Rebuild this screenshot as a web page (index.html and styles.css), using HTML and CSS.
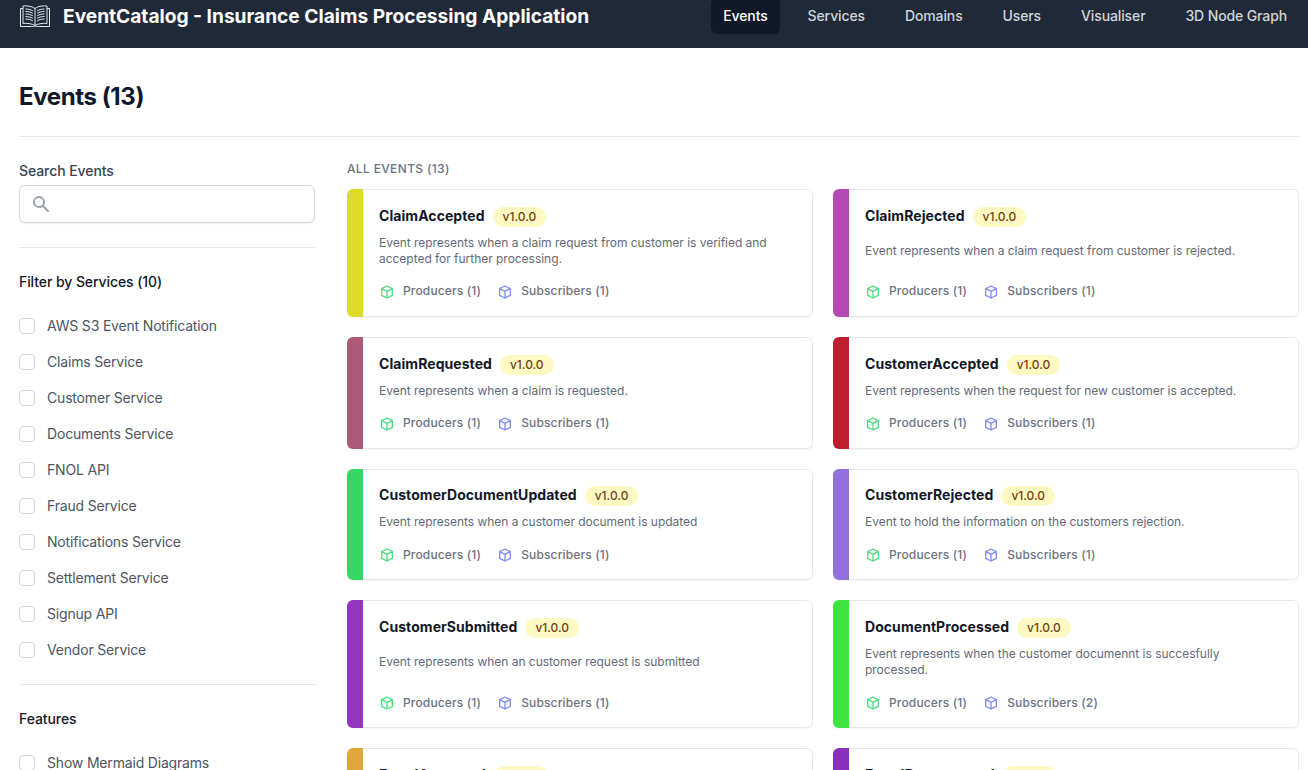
FILE: index.html
```html
<!DOCTYPE html>
<html lang="en">
<head>
<meta charset="utf-8">
<title>Events (13)</title>
<link rel="stylesheet" href="styles.css">
</head>
<body>
<svg class="sprite" aria-hidden="true">
  <symbol id="cube" viewBox="0 0 24 24"><path fill="none" stroke="currentColor" stroke-width="2" stroke-linecap="round" stroke-linejoin="round" d="M20 7l-8-4-8 4m16 0l-8 4m8-4v10l-8 4m0-10L4 7m8 4v10M4 7v10l8 4"/></symbol>
</svg>
<header class="topbar">
  <a class="brand" href="#">
    <svg class="brand-icon" viewBox="0 0 30 22" fill="none" stroke="currentColor" stroke-width="1">
      <path d="M15 3.500C12 1 6 .500 3 1V18.500C6 18 12 18.500 15 20.500C18 18.500 24 18 27 18.500V1C24 .500 18 1 15 3.500Z"/>
      <path d="M15 3.500V20.500"/>
      <path d="M3 3.500H.500V21.500H11.500C13 21.500 14 21.500 15 22C16 21.500 17 21.500 18.500 21.500H29.500V3.500H27"/>
      <path d="M5.500 4C8 4 10.500 4.500 12.800 5.800M5.500 6.500C8 6.500 10.500 7 12.800 8.300M5.500 9C8 9 10.500 9.500 12.800 10.800M5.500 11.500C8 11.500 10.500 12 12.800 13.300M5.500 14C8 14 10.500 14.500 12.800 15.800M24.500 4C22 4 19.500 4.500 17.200 5.800M24.500 6.500C22 6.500 19.500 7 17.200 8.300M24.500 9C22 9 19.500 9.500 17.200 10.800M24.500 11.500C22 11.500 19.500 12 17.200 13.300M24.500 14C22 14 19.500 14.500 17.200 15.800"/>
    </svg>
    <span class="brand-name">EventCatalog - Insurance Claims Processing Application</span>
  </a>
  <nav class="nav">
    <a class="nav-link is-active" href="#">Events</a>
    <a class="nav-link" href="#">Services</a>
    <a class="nav-link" href="#">Domains</a>
    <a class="nav-link" href="#">Users</a>
    <a class="nav-link" href="#">Visualiser</a>
    <a class="nav-link" href="#">3D Node Graph</a>
  </nav>
</header>
<main class="page">
  <h1 class="page-title">Events (13)</h1>
  <div class="layout">
    <aside class="sidebar">
      <label class="search-label" for="search">Search Events</label>
      <div class="search-box">
        <svg class="search-icon" viewBox="0 0 20 20" fill="currentColor"><path fill-rule="evenodd" clip-rule="evenodd" d="M8 4a4 4 0 100 8 4 4 0 000-8zM2 8a6 6 0 1110.890 3.476l4.817 4.817a1 1 0 01-1.414 1.414l-4.816-4.816A6 6 0 012 8z"/></svg>
        <input class="search-input" id="search" type="text">
      </div>
      <section class="filter">
        <h2 class="filter-title">Filter by Services (10)</h2>
        <ul class="filter-list">
          <li class="filter-item"><span class="check"></span>AWS S3 Event Notification</li>
          <li class="filter-item"><span class="check"></span>Claims Service</li>
          <li class="filter-item"><span class="check"></span>Customer Service</li>
          <li class="filter-item"><span class="check"></span>Documents Service</li>
          <li class="filter-item"><span class="check"></span>FNOL API</li>
          <li class="filter-item"><span class="check"></span>Fraud Service</li>
          <li class="filter-item"><span class="check"></span>Notifications Service</li>
          <li class="filter-item"><span class="check"></span>Settlement Service</li>
          <li class="filter-item"><span class="check"></span>Signup API</li>
          <li class="filter-item"><span class="check"></span>Vendor Service</li>
        </ul>
      </section>
      <section class="filter">
        <h2 class="filter-title">Features</h2>
        <ul class="filter-list">
          <li class="filter-item"><span class="check"></span>Show Mermaid Diagrams</li>
        </ul>
      </section>
    </aside>
    <section class="results">
      <h2 class="results-title">All Events (13)</h2>
      <div class="grid">
        <article class="card"><div class="bar c1"></div><div class="body"><div class="head"><span class="name">ClaimAccepted</span><span class="badge">v1.0.0</span></div><p class="desc"><span>Event represents when a claim request from customer is verified and accepted for further processing.</span></p><div class="meta"><span class="stat"><svg class="cube green"><use href="#cube"/></svg>Producers (1)</span><span class="stat"><svg class="cube indigo"><use href="#cube"/></svg>Subscribers (1)</span></div></div></article>
        <article class="card"><div class="bar c2"></div><div class="body"><div class="head"><span class="name">ClaimRejected</span><span class="badge">v1.0.0</span></div><p class="desc"><span>Event represents when a claim request from customer is rejected.</span></p><div class="meta"><span class="stat"><svg class="cube green"><use href="#cube"/></svg>Producers (1)</span><span class="stat"><svg class="cube indigo"><use href="#cube"/></svg>Subscribers (1)</span></div></div></article>
        <article class="card"><div class="bar c3"></div><div class="body"><div class="head"><span class="name">ClaimRequested</span><span class="badge">v1.0.0</span></div><p class="desc"><span>Event represents when a claim is requested.</span></p><div class="meta"><span class="stat"><svg class="cube green"><use href="#cube"/></svg>Producers (1)</span><span class="stat"><svg class="cube indigo"><use href="#cube"/></svg>Subscribers (1)</span></div></div></article>
        <article class="card"><div class="bar c4"></div><div class="body"><div class="head"><span class="name">CustomerAccepted</span><span class="badge">v1.0.0</span></div><p class="desc"><span>Event represents when the request for new customer is accepted.</span></p><div class="meta"><span class="stat"><svg class="cube green"><use href="#cube"/></svg>Producers (1)</span><span class="stat"><svg class="cube indigo"><use href="#cube"/></svg>Subscribers (1)</span></div></div></article>
        <article class="card"><div class="bar c5"></div><div class="body"><div class="head"><span class="name">CustomerDocumentUpdated</span><span class="badge">v1.0.0</span></div><p class="desc"><span>Event represents when a customer document is updated</span></p><div class="meta"><span class="stat"><svg class="cube green"><use href="#cube"/></svg>Producers (1)</span><span class="stat"><svg class="cube indigo"><use href="#cube"/></svg>Subscribers (1)</span></div></div></article>
        <article class="card"><div class="bar c6"></div><div class="body"><div class="head"><span class="name">CustomerRejected</span><span class="badge">v1.0.0</span></div><p class="desc"><span>Event to hold the information on the customers rejection.</span></p><div class="meta"><span class="stat"><svg class="cube green"><use href="#cube"/></svg>Producers (1)</span><span class="stat"><svg class="cube indigo"><use href="#cube"/></svg>Subscribers (1)</span></div></div></article>
        <article class="card"><div class="bar c7"></div><div class="body"><div class="head"><span class="name">CustomerSubmitted</span><span class="badge">v1.0.0</span></div><p class="desc"><span>Event represents when an customer request is submitted</span></p><div class="meta"><span class="stat"><svg class="cube green"><use href="#cube"/></svg>Producers (1)</span><span class="stat"><svg class="cube indigo"><use href="#cube"/></svg>Subscribers (1)</span></div></div></article>
        <article class="card"><div class="bar c8"></div><div class="body"><div class="head"><span class="name">DocumentProcessed</span><span class="badge">v1.0.0</span></div><p class="desc"><span>Event represents when the customer documennt is succesfully processed.</span></p><div class="meta"><span class="stat"><svg class="cube green"><use href="#cube"/></svg>Producers (1)</span><span class="stat"><svg class="cube indigo"><use href="#cube"/></svg>Subscribers (2)</span></div></div></article>
        <article class="card"><div class="bar c9"></div><div class="body"><div class="head"><span class="name">FraudApproved</span><span class="badge">v1.0.0</span></div></div></article>
        <article class="card"><div class="bar c10"></div><div class="body"><div class="head"><span class="name">FraudReprocessed</span><span class="badge">v1.0.0</span></div></div></article>
      </div>
    </section>
  </div>
</main>
</body>
</html>
```
FILE: styles.css
```css
* { box-sizing: border-box; }
html, body { margin: 0; padding: 0; }
body { font-family: Inter, "Liberation Sans", sans-serif; color: #111827; background: #fff; }
.sprite { display: none; }
a { text-decoration: none; color: inherit; }
h1, h2, p, ul { margin: 0; padding: 0; }
ul { list-style: none; }

.topbar { height: 48px; background: #1f2937; display: flex; justify-content: space-between; padding: 0 9px 0 20px; }
.brand { display: flex; align-items: flex-start; color: #fff; padding-top: 4px; }
.brand-icon { width: 30px; height: 22px; margin-top: 1px; color: #e5e7eb; margin-right: 13px; flex: none; }
.brand-name { font-size: 19.15px; line-height: 24px; font-weight: 700; white-space: nowrap; }
.nav { display: flex; align-items: flex-start; gap: 16px; margin-top: -2px; }
.nav-link { display: block; padding: 8px 12px; height: 36px; font-size: 14px; line-height: 20px; font-weight: 500; letter-spacing: -.12px; color: #d1d5db; border-radius: 6px; }
.nav-link.is-active { background: #111827; color: #fff; }

.page { padding: 0 9px 0 19px; }
.page-title { height: 89px; padding-top: 33px; font-size: 24px; line-height: 32px; font-weight: 700; letter-spacing: -.4px; color: #111827; border-bottom: 1px solid #e5e7eb; }
.layout { display: grid; grid-template-columns: 296px 1fr; column-gap: 32px; padding-top: 24px; }

.search-label { display: block; font-size: 14px; line-height: 20px; font-weight: 500; letter-spacing: -.08px; color: #374151; }
.search-box { position: relative; margin-top: 4px; height: 38px; }
.search-icon { position: absolute; left: 12px; top: 9px; width: 20px; height: 20px; color: #9ca3af; }
.search-input { display: block; width: 100%; height: 38px; border: 1px solid #d1d5db; border-radius: 6px; box-shadow: 0 1px 2px rgba(0,0,0,.05); background: #fff; }
.filter { border-top: 1px solid #e5e7eb; margin-top: 24px; padding-top: 24px; }
.filter + .filter { margin-top: 16px; }
.filter-title { font-size: 14px; line-height: 20px; font-weight: 500; letter-spacing: -.08px; color: #111827; }
.filter-list { margin-top: 16px; }
.filter-item { display: flex; align-items: center; height: 36px; font-size: 14px; line-height: 34px; letter-spacing: -.18px; color: #4b5563; }
.check { width: 16px; height: 16px; border: 1px solid #d1d5db; border-radius: 4px; margin-right: 12px; flex: none; background: #fff; }

.results-title { font-size: 12px; line-height: 16px; font-weight: 500; color: #6b7280; letter-spacing: .35px; text-transform: uppercase; }
.grid { display: grid; grid-template-columns: 1fr 1fr; column-gap: 20px; row-gap: 20px; margin-top: 12px; }
.card { display: flex; border-radius: 6px; box-shadow: 0 1px 2px rgba(0,0,0,.05); overflow: hidden; background: #fff; }
.bar { width: 16px; flex: none; }
.body { flex: 1; min-width: 0; display: flex; flex-direction: column; padding: 15px 16px 15px; border: 1px solid #e5e7eb; border-left: 0; border-radius: 0 6px 6px 0; }
.head { display: flex; align-items: center; height: 21.75px; }
.name { font-size: 14px; line-height: 20px; font-weight: 700; letter-spacing: .06px; color: #111827; }
.badge { margin: 2px 0 0 8px; height: 20px; padding: 0 10px; border-radius: 10px; background: #fef9c3; color: #713f12; font-size: 12px; line-height: 20px; font-weight: 500; }
.desc { flex: 1; display: flex; align-items: center; margin-top: 8px; font-size: 12px; line-height: 16px; letter-spacing: -.03px; color: #626a78; }
.meta { display: flex; gap: 16px; margin-top: 14px; }
.stat { display: flex; align-items: center; height: 20px; font-size: 12px; font-weight: 500; letter-spacing: .15px; color: #6b7280; }
.cube { width: 16px; height: 16px; margin-right: 8px; flex: none; position: relative; top: 1px; }
.green { color: #4ade80; }
.indigo { color: #818cf8; }

.c1 { background: #dedc2b; }
.c2 { background: #b54ab5; }
.c3 { background: #ad5a78; }
.c4 { background: #bf1e2e; }
.c5 { background: #36d664; }
.c6 { background: #9370db; }
.c7 { background: #9436bf; }
.c8 { background: #3ee43e; }
.c9 { background: #e0a63a; }
.c10 { background: #8a2fb8; }
```
